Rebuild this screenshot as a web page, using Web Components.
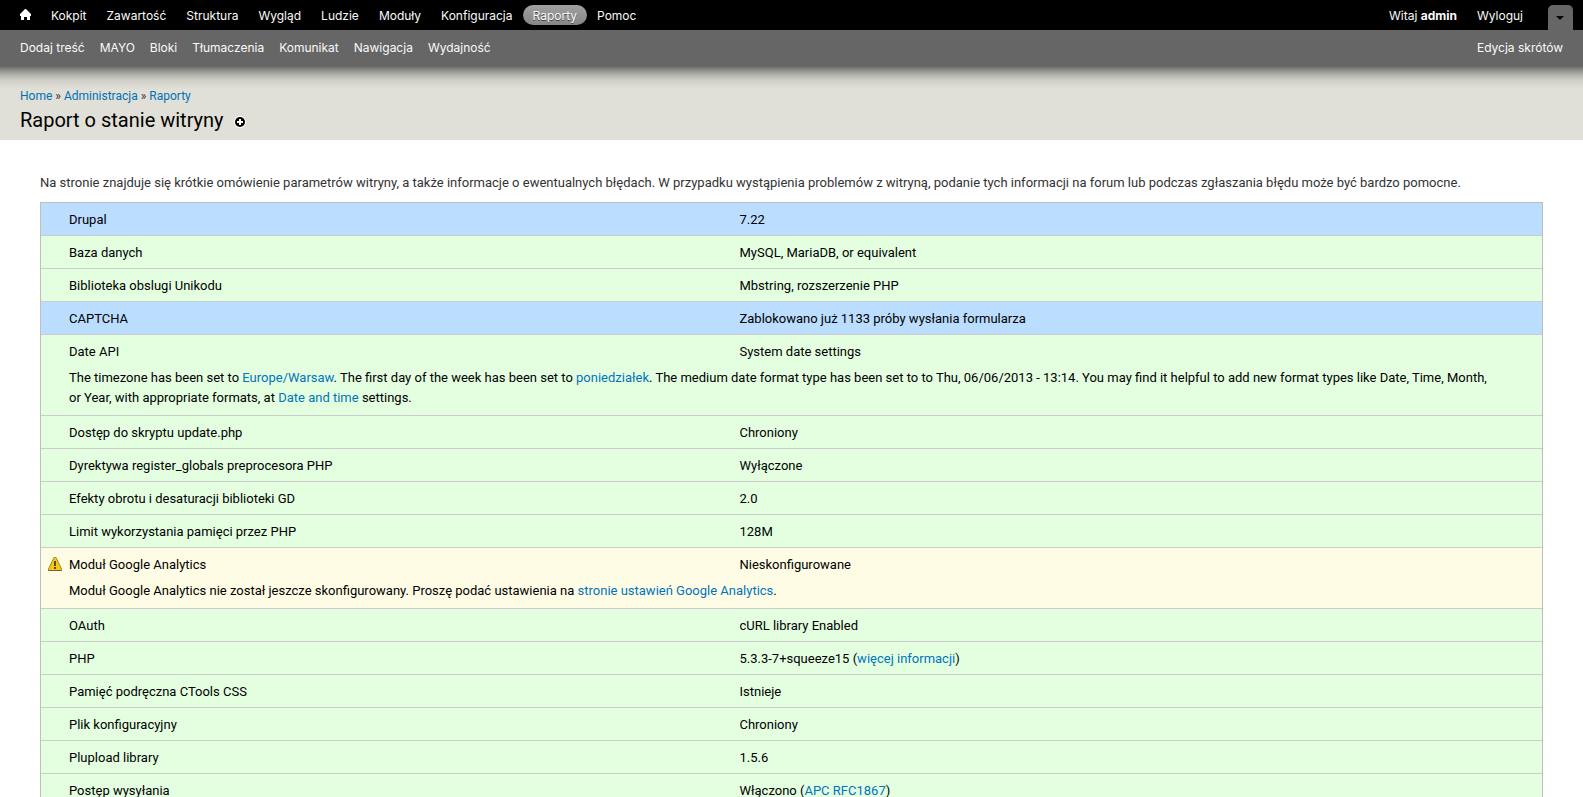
<!DOCTYPE html>
<html lang="pl">
<head>
<meta charset="utf-8">
<title>Raport o stanie witryny</title>
<style>
body { margin: 0; background: #fff; color: #333; font: 13px/20px Roboto, "Liberation Sans", sans-serif; }
</style>
</head>
<body>
<admin-toolbar></admin-toolbar>
<shortcut-bar></shortcut-bar>
<page-branding>
  <a slot="crumb" href="#home">Home</a>
  <a slot="crumb" href="#admin">Administracja</a>
  <a slot="crumb" href="#reports">Raporty</a>
  <span slot="title">Raport o stanie witryny</span>
</page-branding>
<page-content>
  <span slot="help">Na stronie znajduje się krótkie omówienie parametrów witryny, a także informacje o ewentualnych błędach. W przypadku wystąpienia problemów z witryną, podanie tych informacji na forum lub podczas zgłaszania błędu może być bardzo pomocne.</span>
  <status-report></status-report>
</page-content>

<script>
function define(name, html) {
  const t = document.createElement('template');
  t.innerHTML = html;
  customElements.define(name, class extends HTMLElement {
    constructor() {
      super();
      this.attachShadow({ mode: 'open' }).append(t.content.cloneNode(true));
    }
  });
}

define('admin-toolbar', `
<style>
:host { display: block; background: #000; color: #fff; font: 12px/20px Inter, "DejaVu Sans", sans-serif; }
nav { display: flex; justify-content: space-between; align-items: flex-start; height: 30px; padding: 0 10px; box-sizing: border-box; }
ul { display: flex; list-style: none; margin: 0; padding: 5px 0 0; }
.user { padding-right: 15px; }
a { display: block; box-sizing: border-box; height: 20px; padding: 1px 10px 0; border-radius: 10px; color: #fafafa; text-decoration: none; }
.active { background: linear-gradient(#a0a0a0, #868686); text-shadow: 0 1px 0 #444; }
svg { display: block; }
.right { display: flex; }
button { margin: 5px 0 0; padding: 0; border: 0; width: 25px; height: 25px; border-radius: 5px 5px 0 0; background: #666; display: grid; place-items: center; }
</style>
<nav aria-label="Administracja">
  <ul>
    <li><a href="#" aria-label="Home"><svg width="11" height="16" viewBox="0 0 11 16"><path fill="#fff" d="M5 3h1l5 5v2h-1v4H7v-3H4v3H1v-4H0V8z"/></svg></a></li>
    <li><a href="#">Kokpit</a></li>
    <li><a href="#">Zawartość</a></li>
    <li><a href="#">Struktura</a></li>
    <li><a href="#">Wygląd</a></li>
    <li><a href="#">Ludzie</a></li>
    <li><a href="#">Moduły</a></li>
    <li><a href="#">Konfiguracja</a></li>
    <li><a class="active" href="#">Raporty</a></li>
    <li><a href="#">Pomoc</a></li>
  </ul>
  <div class="right">
    <ul class="user">
      <li><a href="#">Witaj <b>admin</b></a></li>
      <li><a href="#">Wyloguj</a></li>
    </ul>
    <button aria-label="Skróty"><svg width="9" height="6" viewBox="0 0 9 6"><path d="M0 1h8L4 5z"/></svg></button>
  </div>
</nav>`);

define('shortcut-bar', `
<style>
:host { display: block; position: relative; background: #666; font: 12px/20px Inter, "DejaVu Sans", sans-serif; }
:host::after { content: ""; position: absolute; top: 100%; left: 0; right: 0; height: 24px; pointer-events: none;
  background: linear-gradient(rgba(0,0,0,.58), rgba(0,0,0,.38) 5px, rgba(0,0,0,.2) 10px, rgba(0,0,0,.08) 15px, rgba(0,0,0,0)); }
nav { display: flex; justify-content: space-between; padding: 8px 20px 7px; }
ul { display: flex; gap: 15px; list-style: none; margin: 0; padding: 0; }
a { color: #fafafa; text-decoration: none; }
</style>
<nav aria-label="Skróty">
  <ul>
    <li><a href="#">Dodaj treść</a></li>
    <li><a href="#">MAYO</a></li>
    <li><a href="#">Bloki</a></li>
    <li><a href="#">Tłumaczenia</a></li>
    <li><a href="#">Komunikat</a></li>
    <li><a href="#">Nawigacja</a></li>
    <li><a href="#">Wydajność</a></li>
  </ul>
  <a href="#">Edycja skrótów</a>
</nav>`);

customElements.define('page-branding', class extends HTMLElement {
  constructor() {
    super();
    this.attachShadow({ mode: 'open' }).innerHTML = `
<style>
:host { display: block; background: #e0e0d8; padding: 21px 20px 6px; }
.crumbs { display: flex; gap: 3px; font-size: 12px; line-height: 20px; }
::slotted(a) { color: #0071b3; text-decoration: none; }
h1 { margin: 0; font-size: 20px; line-height: 28px; font-weight: 400; color: #000; }
.head { display: flex; align-items: center; gap: 10px; }
.add { padding-top: 4px; }
svg { display: block; }
</style>
<nav class="crumbs" aria-label="Breadcrumb"></nav>
<div class="head"><h1><slot name="title"></slot></h1>
<a class="add" href="#add" aria-label="Dodaj skrót"><svg width="12" height="12" viewBox="0 0 12 12"><circle cx="6" cy="6" r="6" fill="#fff"/><circle cx="6" cy="6" r="5"/><path stroke="#fff" stroke-width="2" d="M6 3v6M3 6h6"/></svg></a></div>`;
  }
  connectedCallback() {
    const nav = this.shadowRoot.querySelector('nav');
    queueMicrotask(() => {
      [...this.querySelectorAll('[slot=crumb]')].forEach((a, i) => {
        if (i) nav.append(Object.assign(document.createElement('span'), { textContent: '»' }));
        const s = document.createElement('slot');
        s.name = a.slot = 'crumb-' + i;
        nav.append(s);
      });
    });
  }
});

define('page-content', `
<style>
:host { display: block; padding: 33px 40px 40px; }
.help { margin: 0 0 9px; }
</style>
<p class="help"><slot name="help"></slot></p>
<slot></slot>`);

const rows = [
  ['info', 'Drupal', '7.22'],
  ['ok', 'Baza danych', 'MySQL, MariaDB, or equivalent'],
  ['ok', 'Biblioteka obslugi Unikodu', 'Mbstring, rozszerzenie PHP'],
  ['info', 'CAPTCHA', 'Zablokowano już 1133 próby wysłania formularza'],
  ['ok', 'Date API', 'System date settings', 'The timezone has been set to <a href="#">Europe/Warsaw</a>. The first day of the week has been set to <a href="#">poniedziałek</a>. The medium date format type has been set to to Thu, 06/06/2013 - 13:14. You may find it helpful to add new format types like Date, Time, Month, or Year, with appropriate formats, at <a href="#">Date and time</a> settings.'],
  ['ok', 'Dostęp do skryptu update.php', 'Chroniony'],
  ['ok', 'Dyrektywa register_globals preprocesora PHP', 'Wyłączone'],
  ['ok', 'Efekty obrotu i desaturacji biblioteki GD', '2.0'],
  ['ok', 'Limit wykorzystania pamięci przez PHP', '128M'],
  ['warning', 'Moduł Google Analytics', 'Nieskonfigurowane', 'Moduł Google Analytics nie został jeszcze skonfigurowany. Proszę podać ustawienia na <a href="#">stronie ustawień Google Analytics</a>.'],
  ['ok', 'OAuth', 'cURL library Enabled'],
  ['ok', 'PHP', '5.3.3-7+squeeze15 (<a href="#">więcej informacji</a>)'],
  ['ok', 'Pamięć podręczna CTools CSS', 'Istnieje'],
  ['ok', 'Plik konfiguracyjny', 'Chroniony'],
  ['ok', 'Plupload library', '1.5.6'],
  ['ok', 'Postęp wysyłania', 'Włączono (<a href="#">APC RFC1867</a>)']
];
const warningIcon = `<svg width="16" height="16" viewBox="0 0 16 16" role="img" aria-label="Ostrzeżenie"><path d="M7 1.500h2L14.500 13v1.500h-13V13z" fill="#f9c80e" stroke="#a5882f" stroke-linejoin="round"/><path d="M1.500 14.500h13" stroke="#6d6440"/><path d="M7 5h2v5H7zM7 11h2v2H7z" fill="#5d4a12"/></svg>`;

define('status-report', `
<style>
:host { display: block; color: #000; }
table { width: 100%; table-layout: fixed; border-collapse: separate; border-spacing: 0; border: 1px solid #bebfb9; border-bottom: 0; }
td, th { padding: 0; font-weight: 400; text-align: left; line-height: 20px; vertical-align: top; }
th, .value { padding: 7px 0 5px; }
.value { padding-left: 8px; }
.icon { padding: 8px 0 0 6px; }
.desc { padding: 1px 48px 7px 0; }
.last > * { border-bottom: 1px solid #ccc; }
.ok { background: #e4ffe0; }
.info { background: #bdf; }
.warning { background: #fffce5; }
.c1 { width: 28px; } .c3 { width: 54%; }
a { color: #0074bd; text-decoration: none; }
svg { display: block; }
</style>
<table><colgroup><col class="c1"><col><col class="c3"></colgroup><tbody>` +
rows.map(([kind, title, value, desc]) =>
  `<tr class="${kind}${desc ? '' : ' last'}"><td class="icon">${kind === 'warning' ? warningIcon : ''}</td><th scope="row">${title}</th><td class="value">${value}</td></tr>` +
  (desc ? `<tr class="${kind} last"><td></td><td class="desc" colspan="2">${desc}</td></tr>` : '')
).join('') + `</tbody></table>`);
</script>
</body>
</html>
